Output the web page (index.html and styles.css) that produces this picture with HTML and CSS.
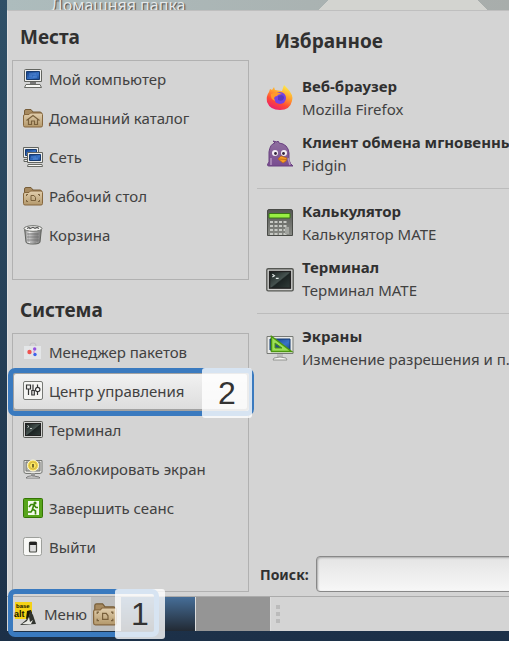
FILE: index.html
```html
<!DOCTYPE html>
<html lang="ru">
<head>
<meta charset="utf-8">
<meta name="viewport" content="width=device-width, initial-scale=1">
<title>Меню</title>
<link rel="stylesheet" href="styles.css">
</head>
<body>
<svg class="defs" width="0" height="0" aria-hidden="true">
  <defs>
    <linearGradient id="tan" x2="0" y2="1"><stop stop-color="#e2cfae"/><stop offset="1" stop-color="#b3986b"/></linearGradient>
    <linearGradient id="screen" x2="1" y2="1"><stop stop-color="#123c83"/><stop offset=".6" stop-color="#3974c8"/><stop offset="1" stop-color="#174890"/></linearGradient>
    <linearGradient id="term" x2="1" y2="1"><stop stop-color="#151b1a"/><stop offset=".5" stop-color="#465350"/><stop offset=".55" stop-color="#1c2423"/><stop offset="1" stop-color="#303c39"/></linearGradient>
    <linearGradient id="metal"><stop stop-color="#818181"/><stop offset=".3" stop-color="#eee"/><stop offset=".6" stop-color="#aaa"/><stop offset="1" stop-color="#777"/></linearGradient>
    <linearGradient id="fire" x1=".8" y1="0" x2=".3" y2="1"><stop stop-color="#fff34a"/><stop offset=".4" stop-color="#ffa12d"/><stop offset=".7" stop-color="#ff4a35"/><stop offset="1" stop-color="#e91d72"/></linearGradient>
    <linearGradient id="bird" x2="0" y2="1"><stop stop-color="#8f709f"/><stop offset="1" stop-color="#794c90"/></linearGradient>
    <linearGradient id="case" x2="0" y2="1"><stop stop-color="#555753"/><stop offset="1" stop-color="#888a85"/></linearGradient>
    <symbol id="folder" viewBox="0 0 20 20">
      <path d="M1.500 17V3q0-1.500 1.500-1.500h5l2 2.500h7q1.500 0 1.500 1.500V17z" fill="#a78a60" stroke="#775d38"/>
      <path d="M.5 8q0-1.500 1.500-1.500h4l1.500-1.500H18q1.500 0 1.500 1.500v11q0 1.500-1.500 1.500H2q-1.500 0-1.500-1.500z" fill="url(#tan)" stroke="#86673e"/>
    </symbol>
    <symbol id="desk" viewBox="0 0 20 20">
      <use href="#folder"/>
      <path d="M3.500 10V8.500H5M15 8.500h1.500V10M3.500 14v1.500H5M15 15.500h1.500V14M8 9.500h3l1.500 2v3H8z" fill="none" stroke="#79603c"/>
    </symbol>
    <symbol id="terminal" viewBox="0 0 20 18">
      <rect x=".5" y=".5" width="19" height="16" rx="1" fill="#d0d1cf" stroke="#555753"/>
      <rect x="2.500" y="2.500" width="15" height="12" fill="url(#term)" stroke="#222"/>
      <path d="M4.500 4.500l1.500 1-1.500 1M7 7.500h2" fill="none" stroke="#e4ebe8" stroke-width=".8"/>
    </symbol>
  </defs>
</svg>

<div class="desktop">
  <div class="wallpaper"><span class="desktop-label">Домашняя папка</span></div>

  <main class="menu">
    <div class="sidebar">
      <h2 class="heading">Места</h2>
      <nav class="list places" aria-label="Места">
        <button class="item"><svg class="icon" viewBox="0 0 20 20"><path d="M2.500.5h15q1 0 1 1v11h-17v-11q0-1 1-1z" fill="#eeeeec" stroke="#62645f"/><path d="M3.500 2.500h13v8h-13z" fill="url(#screen)" stroke="#173b70"/><path d="M6 5h7M6 7h3M10 8h4" stroke="#5a92dd" stroke-width=".8"/><path d="M7 13h6v2H7z" fill="#777"/><path d="M3 15.500h14l1.500 3h-17z" fill="#f8f8f5" stroke="#686a65"/></svg>Мой компьютер</button>
        <button class="item"><svg class="icon" viewBox="0 0 20 20"><use href="#folder"/><path d="M3.500 12.500L10 7.500l6.500 5M5.500 11.500v5H8.500V13h3v3.500h3v-5" fill="none" stroke="#79603c" stroke-width="1.200"/></svg>Домашний каталог</button>
        <button class="item"><svg class="icon" viewBox="0 0 20 20"><path d="M.5.5h15v10H.5zM1 12.500h6v2H1z" fill="#eeeeec" stroke="#62645f"/><path d="M2.500 2.500h11v6h-11z" fill="url(#screen)" stroke="#173b70"/><path d="M4.500 5.500h15v10h-15z" fill="#eeeeec" stroke="#62645f"/><path d="M6.500 7.500h11v6h-11z" fill="url(#screen)" stroke="#173b70"/><path d="M8 10h5M10 12h5" stroke="#5a92dd" stroke-width=".8"/><path d="M5 17.500h14l.5 2h-15z" fill="#f8f8f5" stroke="#686a65"/></svg>Сеть</button>
        <button class="item"><svg class="icon" viewBox="0 0 20 20"><use href="#desk"/></svg>Рабочий стол</button>
        <button class="item"><svg class="icon" viewBox="0 0 20 20"><path d="M1.500 3L3 17q.2 2 7 2t7-2l1.500-14z" fill="url(#metal)" stroke="#60625e"/><path d="M6 8v9M8 8v10M10 8v10M12 8v10M14 8v9M4 9h12M4 12h12M4 15h12" stroke="#666" stroke-width=".6"/><ellipse cx="10" cy="3.500" rx="9" ry="2.800" fill="#f5f5f3" stroke="#70726e"/><path d="M4 3.500l2-1 1 1 3-1.200 2 1 2-.8 2 1" fill="none" stroke="#555" stroke-width="1.200"/></svg>Корзина</button>
      </nav>

      <h2 class="heading">Система</h2>
      <nav class="list system" aria-label="Система">
        <button class="item"><svg class="icon" viewBox="0 0 20 20"><path d="M7 4q0-3 3-3t3 3" fill="none" stroke="#c3c4c6" stroke-width="1.200"/><path d="M1 4h17v13H1z" fill="#e4e6e8"/><circle cx="6.500" cy="10" r="2.200" fill="#ef5350"/><circle cx="11.700" cy="7" r="1.700" fill="#9551e0"/><circle cx="12" cy="12.500" r="1.700" fill="#3e62e9"/><circle cx="11" cy="10" r=".8" fill="#df62c6"/></svg>Менеджер пакетов</button>
        <div class="marked">
          <button class="item active"><svg class="icon" viewBox="0 0 20 20"><rect x=".5" y=".5" width="19" height="18" rx="1.500" fill="#f5f5f3" stroke="#777975"/><path d="M3.500 4h4v4h-4zM5.500 8v6M10 3.500v6M8.800 9.500h2.500V14H8.800zM14.500 3.500v3M14.500 11v3" fill="none" stroke="#333" stroke-width="1.200"/><circle cx="14.700" cy="8.500" r="2.200" fill="#fff" stroke="#333" stroke-width="1.200"/></svg>Центр управления</button>
          <div class="callout"><span class="step">2</span></div>
        </div>
        <button class="item"><svg class="icon" viewBox="0 0 20 20"><use href="#terminal" y="1" width="20" height="18"/></svg>Терминал</button>
        <button class="item"><svg class="icon" viewBox="0 0 20 20"><path d="M1 1.500h18v12l-2 1H3l-2-1z" fill="#e6e6e2" stroke="#777975"/><path d="M3 3h14v9H3z" fill="#b3b5ac" stroke="#777"/><path d="M8 14h4v3H8z" fill="#999"/><path d="M4 18q3-2 12 0l1 1H3z" fill="#fff" stroke="#777"/><circle cx="10" cy="6.500" r="5.500" fill="#f0d34a" stroke="#fffbd4"/><circle cx="10" cy="6.500" r="3.500" fill="#fae65f" stroke="#b7982f" stroke-width=".6"/><path d="M10 5v3.500" stroke="#4d421c" stroke-width="1.500"/></svg>Заблокировать экран</button>
        <button class="item"><svg class="icon" viewBox="0 0 20 20"><rect x=".5" y=".5" width="19" height="19" rx="1" fill="#58a51b" stroke="#347505"/><path d="M5 3h11v14H5z" fill="#f4faed"/><circle cx="12" cy="5" r="1.600" fill="#3b8709"/><path d="M6 9l2-2.500h3L9.500 11l3 2v3.500M10 11l-2 3H5M11 7l2 2.500h2" fill="none" stroke="#3b8709" stroke-width="1.600"/></svg>Завершить сеанс</button>
        <button class="item"><svg class="icon" viewBox="0 0 20 20"><rect x=".5" y=".5" width="18" height="18" rx="2" fill="#f8f8f6" stroke="#9d9f9b"/><rect x="6.500" y="5" width="7" height="10" rx="1" fill="#ddd" stroke="#4b4d47" stroke-width="1.200"/><path d="M6.500 5h7v3h-7z" fill="#222"/></svg>Выйти</button>
      </nav>
    </div>

    <div class="content">
      <h2 class="heading heading-favorites">Избранное</h2>
      <div class="group">
        <button class="app"><svg class="app-icon" viewBox="0 0 28 28"><path d="M3 8l1-3 2 1 2-3 1 3 7 1 2-6 3 3q7 7 5 13-2 9-12 9T1 18Q0 12 3 8z" fill="url(#fire)"/><circle cx="14" cy="14" r="6" fill="#7542e5"/><path d="M5 10q6-3 11 0-4 0-5 2-2 0-3 2l1 3q-5-2-4-7z" fill="#ff9a2b"/><path d="M12 12q6-2 6 2-1 4-6 2z" fill="#593abf"/></svg><span class="app-text"><strong>Веб-браузер</strong><span>Mozilla Firefox</span></span></button>
        <button class="app"><svg class="app-icon" viewBox="0 0 28 28"><path d="M3 26q-3 0 0-4V12Q4 4 9 3L7 1l4 1 1-1 1 2q9 1 10 10v7q1 4 4 6z" fill="url(#bird)" stroke="#694080"/><path d="M5 18v7M22 18l2 7" stroke="#b394bf" stroke-width="1.500"/><circle cx="9" cy="13" r="3" fill="#f4eff5"/><circle cx="18" cy="13" r="3" fill="#f4eff5"/><circle cx="9.500" cy="13.500" r="1.400" fill="#33233c"/><circle cx="17.500" cy="13.500" r="1.400" fill="#33233c"/><path d="M15 16l6 2-1 3-3 2-5-4z" fill="#f89b24" stroke="#b66619" stroke-width=".7"/><path d="M13 19l7 .5" stroke="#b66619" stroke-width=".8"/></svg><span class="app-text"><strong>Клиент обмена мгновенны</strong><span>Pidgin</span></span></button>
      </div>
      <hr class="divider">
      <div class="group">
        <button class="app"><svg class="app-icon" viewBox="0 0 28 28"><path d="M1.500 26.500V2q0-1.500 1.500-1.500h22q1.500 0 1.500 1.500v24.500z" fill="url(#case)" stroke="#494b47"/><path d="M3 4.500h21V9H3z" fill="#99ef43" stroke="#397914"/><path d="M4 13h18M4 17h18M4 21h18M4 25h18" stroke="#c7c9c4" stroke-width="2" stroke-dasharray="3 1.500"/><path d="M19 18h4v7h-4z" fill="#a2a49f"/></svg><span class="app-text"><strong>Калькулятор</strong><span>Калькулятор MATE</span></span></button>
        <button class="app"><svg class="app-icon" viewBox="0 0 28 28"><use href="#terminal" x="0" y="3" width="28" height="25"/></svg><span class="app-text"><strong>Терминал</strong><span>Терминал MATE</span></span></button>
      </div>
      <hr class="divider">
      <div class="group">
        <button class="app"><svg class="app-icon" viewBox="0 0 28 28"><path d="M1 2.500h26v17H1z" fill="#e8e9e7" stroke="#777975"/><path d="M4 5h20v11H4z" fill="url(#screen)" stroke="#173b70"/><path d="M11 20h6v4h-6z" fill="#bbb"/><path d="M8 24q6-2 12 0l1 2H7z" fill="#f6f6f4" stroke="#92948f"/><path d="M5.500 2.500v15h20z" fill="#9bdf58" stroke="#4d980f" stroke-width="1.500"/><path d="M9 9v5h7z" fill="#284f81" stroke="#4d980f"/></svg><span class="app-text"><strong>Экраны</strong><span>Изменение разрешения и п.</span></span></button>
      </div>
      <div class="search">
        <label for="query">Поиск:</label>
        <input id="query" type="text">
      </div>
    </div>
  </main>

  <footer class="taskbar">
    <button class="start"><svg class="logo" viewBox="0 0 24 24"><path d="M2 0h17v17H2z" fill="#f5d215"/><text class="logo-text" x="3" y="6">base</text><text class="logo-text logo-large" x="1" y="15">alt</text><path d="M14 9l4-1 1 3-3 2v3l-3 1z" fill="#1a1804"/><path d="M7 23l6-5 3-4 1-6 3 5 3 9z" fill="#30332e"/><path d="M9 22l5-3 2-4 1 5 3-2-2 4z" fill="#e7e8e3"/></svg>Меню</button>
    <button class="files" aria-label="Рабочий стол"><svg class="folder-icon" viewBox="0 0 20 20"><use href="#desk"/></svg></button>
    <button class="workspace current" aria-label="Рабочее место 1"></button>
    <button class="workspace" aria-label="Рабочее место 2"></button>
    <span class="grip"><i></i><i></i><i></i></span>
    <div class="callout callout-start"><span class="step">1</span></div>
  </footer>
</div>
</body>
</html>
```

FILE: styles.css
```css
* {
  box-sizing: border-box;
}

body {
  margin: 0;
  background: #fff;
  color: #414141;
  font-family: "Noto Sans", sans-serif;
  font-size: 15px;
}

button {
  margin: 0;
  padding: 0;
  border: 0;
  background: none;
  color: inherit;
  font: inherit;
  text-align: left;
  white-space: nowrap;
}

.defs {
  position: absolute;
}

.desktop {
  overflow: hidden;
  padding: 0 0 10px 7px;
  background: linear-gradient(#2f5067, #1c3048);
}

.wallpaper {
  display: flex;
  height: 10px;
  padding-left: 44px;
  overflow: hidden;
  background:
    linear-gradient(135deg, transparent 8px, #d3d4d0 8px) 310px 0 / 86px 11px no-repeat,
    linear-gradient(-135deg, transparent 8px, #d3d4d0 8px) 396px 0 / 86px 11px no-repeat,
    linear-gradient(90deg, #adbcbd, #a8adab);
}

.desktop-label {
  color: #e6e9e9;
  font-size: 16px;
  line-height: 10px;
  text-shadow: 1px 1px 1px #444;
  white-space: nowrap;
}

.menu {
  display: grid;
  grid-template-columns: 237px minmax(0, 1fr);
  gap: 8px;
  padding: 0 0 4px 4px;
  border-top: 1px solid #bfbfbf;
  border-left: 1px solid #e0e0e0;
  background: #d4d4d4;
}

.heading {
  margin: 0;
  padding-left: 8px;
  color: #303030;
  font-size: 19px;
  line-height: 26px;
}

.sidebar .heading {
  padding-top: 13px;
  padding-bottom: 10px;
}

.list {
  display: flex;
  flex-direction: column;
  box-shadow: inset 0 0 0 1px #b1b1b1;
}

.places {
  min-height: 220px;
  margin-bottom: 4px;
}

.system {
  min-height: 259px;
}

.item {
  display: flex;
  align-items: center;
  gap: 6px;
  width: 100%;
  height: 39px;
  padding: 0 0 2px 11px;
}

.icon {
  flex: none;
  width: 20px;
  height: 20px;
}

.marked {
  position: relative;
}

.active {
  border-radius: 4px;
  background: linear-gradient(#f2f2f2, #dcdcdc);
  box-shadow: inset 0 0 0 2px #a2a2a2;
}

.callout {
  position: absolute;
  inset: -4px -5px -5px -4px;
  border: 5px solid #3a7abf;
  border-radius: 7px;
}

.step {
  position: absolute;
  top: -5px;
  right: -3px;
  width: 50px;
  height: 50px;
  border-radius: 3px;
  background: rgba(255, 255, 255, 0.8);
  color: #333;
  font-family: "Liberation Sans", sans-serif;
  font-size: 32px;
  line-height: 50px;
  text-align: center;
}

.content {
  display: flex;
  flex-direction: column;
}

.heading-favorites {
  padding: 17px 0 21px 18px;
}

.group {
  display: flex;
  flex-direction: column;
  gap: 10px;
  padding-left: 9px;
}

.app {
  display: flex;
  align-items: center;
  gap: 8px;
}

.app-icon {
  flex: none;
  width: 28px;
  height: 28px;
}

.app-text {
  display: flex;
  flex-direction: column;
  line-height: 23px;
}

.app-text strong {
  color: #303030;
}

.divider {
  width: 100%;
  margin: 11px 0;
  border: 0;
  border-top: 1px solid #bcbcbc;
}

.search {
  display: flex;
  align-items: center;
  gap: 7px;
  margin-top: auto;
  padding-left: 3px;
  color: #303030;
  font-size: 14px;
  font-weight: 700;
}

.search input {
  flex: 1;
  min-width: 0;
  height: 36px;
  margin-right: -8px;
  border: 1px solid #888;
  border-radius: 4px;
  background: linear-gradient(#e4e4e4, #f7f7f7);
  box-shadow: inset 1px 1px 2px #aaa;
  font: inherit;
}

.taskbar {
  position: relative;
  display: flex;
  height: 35px;
  border-top: 1px solid #ababab;
  background: #d4d4d4;
}

.start {
  display: flex;
  align-items: center;
  gap: 7px;
  width: 84px;
  padding-left: 6px;
}

.logo {
  width: 24px;
  height: 24px;
}

.logo-text {
  fill: #171300;
  font-family: "Liberation Sans", sans-serif;
  font-size: 6px;
  font-weight: 700;
}

.logo-large {
  font-size: 9px;
}

.files {
  display: flex;
  align-items: center;
  width: 30px;
  padding-left: 2px;
  background: #bfbfbf;
}

.folder-icon {
  width: 24px;
  height: 24px;
}

.workspace {
  width: 75px;
  border-right: 1px solid #ddd;
  background: #959595;
}

.workspace.current {
  background: linear-gradient(#466e98, #222a34);
}

.grip {
  display: flex;
  flex-direction: column;
  justify-content: center;
  gap: 3px;
  padding-left: 5px;
}

.grip i {
  width: 4px;
  height: 4px;
  background: #bbb;
}

.callout-start {
  inset: -8px auto -6px 1px;
  width: 151px;
}

.callout-start .step {
  right: -11px;
}
```
